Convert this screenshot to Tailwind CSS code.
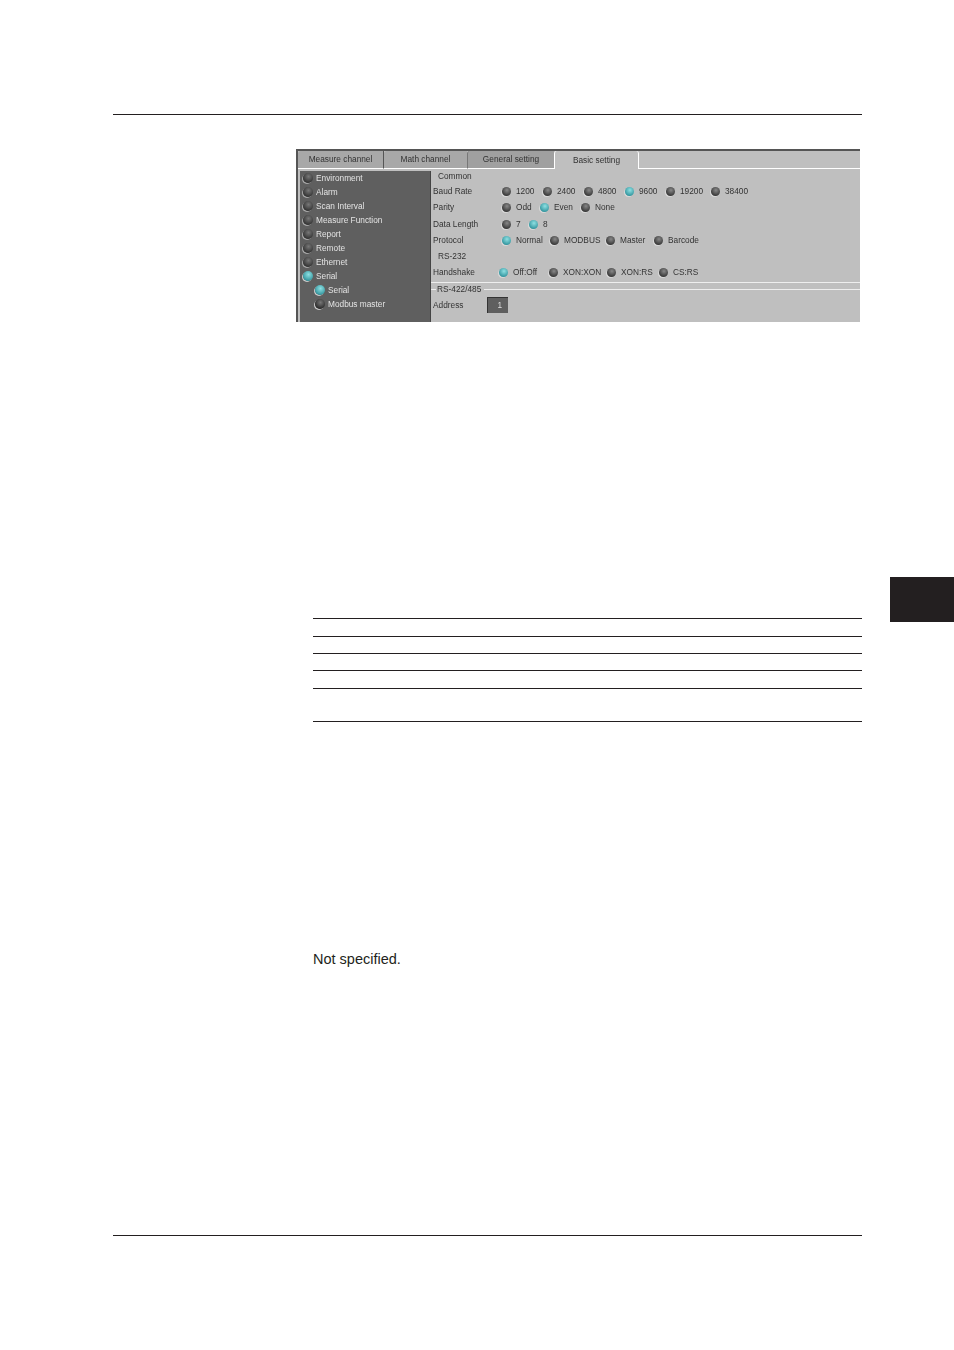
<!DOCTYPE html>
<html lang="en">
<head>
    <meta charset="UTF-8">
    <title>Serial settings</title>
    <script src="https://cdn.jsdelivr.net/npm/@tailwindcss/browser@4"></script>
</head>
<body class="bg-white">
<div class="relative w-[954px] h-[1350px] overflow-hidden bg-white font-['Liberation_Sans',sans-serif] text-black">

    <!-- chapter tab on the page edge -->
    <div class="absolute left-[890px] top-[577px] w-[64px] h-[45px] bg-[#231f20]"></div>

    <div class="pt-[114px] pl-[113px] w-[862px]">
        <div class="border-t border-[#231f20]"></div>
    </div>

    <!-- settings window -->
    <div class="ml-[296px] mt-[34px] w-[564px] h-[173px] bg-[#bfbfbf] border-t-2 border-l-2 border-[#555] overflow-hidden text-[8.3px] leading-none">
        <div class="blur-[0.3px]">
        <!-- tabs -->
        <div class="flex h-[18px] text-[#333]">
            <div class="w-[86px] h-[18px] flex items-center justify-center bg-[#a8a8a8] border-b border-white border-r border-r-[#555] rounded-tl-[3px]">Measure channel</div>
            <div class="w-[83px] h-[18px] flex items-center justify-center bg-[#a8a8a8] border-b border-white rounded-tl-[3px]">Math channel</div>
            <div class="w-[87px] h-[18px] flex items-center justify-center bg-[#a0a0a0] border-b border-white border-l border-l-[#777] rounded-tl-[3px]">General setting</div>
            <div class="w-[85px] h-[18px] flex items-center justify-center bg-[#bfbfbf] border-l border-r border-white rounded-t-[3px]">Basic setting</div>
            <div class="flex-1 h-[18px] border-b border-white"></div>
        </div>

        <div class="flex h-[153px]">
            <!-- tree -->
            <div class="ml-[2px] mt-[2px] w-[131px] h-[151px] bg-[#5f5f5f] text-[#e4e4e4] border-r border-[#444]">
                <div class="flex items-center h-[14px] pl-[3px] gap-[3px]"><span class="w-[10px] h-[10px] rounded-full shadow-[-1px_1px_0_#aaa] bg-[radial-gradient(circle_at_55%_35%,#777,#2c2c2c_80%)]"></span>Environment</div>
                <div class="flex items-center h-[14px] pl-[3px] gap-[3px]"><span class="w-[10px] h-[10px] rounded-full shadow-[-1px_1px_0_#aaa] bg-[radial-gradient(circle_at_55%_35%,#777,#2c2c2c_80%)]"></span>Alarm</div>
                <div class="flex items-center h-[14px] pl-[3px] gap-[3px]"><span class="w-[10px] h-[10px] rounded-full shadow-[-1px_1px_0_#aaa] bg-[radial-gradient(circle_at_55%_35%,#777,#2c2c2c_80%)]"></span>Scan Interval</div>
                <div class="flex items-center h-[14px] pl-[3px] gap-[3px]"><span class="w-[10px] h-[10px] rounded-full shadow-[-1px_1px_0_#aaa] bg-[radial-gradient(circle_at_55%_35%,#777,#2c2c2c_80%)]"></span>Measure Function</div>
                <div class="flex items-center h-[14px] pl-[3px] gap-[3px]"><span class="w-[10px] h-[10px] rounded-full shadow-[-1px_1px_0_#aaa] bg-[radial-gradient(circle_at_55%_35%,#777,#2c2c2c_80%)]"></span>Report</div>
                <div class="flex items-center h-[14px] pl-[3px] gap-[3px]"><span class="w-[10px] h-[10px] rounded-full shadow-[-1px_1px_0_#aaa] bg-[radial-gradient(circle_at_55%_35%,#777,#2c2c2c_80%)]"></span>Remote</div>
                <div class="flex items-center h-[14px] pl-[3px] gap-[3px]"><span class="w-[10px] h-[10px] rounded-full shadow-[-1px_1px_0_#aaa] bg-[radial-gradient(circle_at_55%_35%,#777,#2c2c2c_80%)]"></span>Ethernet</div>
                <div class="flex items-center h-[14px] pl-[3px] gap-[3px]"><span class="w-[10px] h-[10px] rounded-full shadow-[-1px_1px_0_#ccc] bg-[radial-gradient(circle_at_55%_35%,#8fe0e2,#2b8f98_80%)]"></span>Serial</div>
                <div class="flex items-center h-[14px] pl-[15px] gap-[3px]"><span class="w-[10px] h-[10px] rounded-full shadow-[-1px_1px_0_#ccc] bg-[radial-gradient(circle_at_55%_35%,#8fe0e2,#2b8f98_80%)]"></span>Serial</div>
                <div class="flex items-center h-[14px] pl-[15px] gap-[3px]"><span class="w-[10px] h-[10px] rounded-full shadow-[-1px_1px_0_#ccc] bg-[radial-gradient(circle_at_55%_35%,#777,#222_80%)]"></span>Modbus master</div>
            </div>

            <!-- settings -->
            <div class="flex-1 pl-[2px] text-[#333]">
                <div class="h-[14px] pl-[5px] flex items-center">Common</div>

                <div class="flex items-center h-[16px]">
                    <span class="w-[69px]">Baud Rate</span>
                    <div class="w-[41px] flex items-center gap-[5px]"><span class="w-[9px] h-[9px] rounded-full shadow-[-1px_1px_0_#d8d8d8] bg-[radial-gradient(circle_at_55%_35%,#888,#2f2f2f_80%)]"></span>1200</div>
                    <div class="w-[41px] flex items-center gap-[5px]"><span class="w-[9px] h-[9px] rounded-full shadow-[-1px_1px_0_#d8d8d8] bg-[radial-gradient(circle_at_55%_35%,#888,#2f2f2f_80%)]"></span>2400</div>
                    <div class="w-[41px] flex items-center gap-[5px]"><span class="w-[9px] h-[9px] rounded-full shadow-[-1px_1px_0_#d8d8d8] bg-[radial-gradient(circle_at_55%_35%,#888,#2f2f2f_80%)]"></span>4800</div>
                    <div class="w-[41px] flex items-center gap-[5px]"><span class="w-[9px] h-[9px] rounded-full shadow-[-1px_1px_0_#d8d8d8] bg-[radial-gradient(circle_at_55%_35%,#8fe0e2,#2a8f99_80%)]"></span>9600</div>
                    <div class="w-[45px] flex items-center gap-[5px]"><span class="w-[9px] h-[9px] rounded-full shadow-[-1px_1px_0_#d8d8d8] bg-[radial-gradient(circle_at_55%_35%,#888,#2f2f2f_80%)]"></span>19200</div>
                    <div class="w-[45px] flex items-center gap-[5px]"><span class="w-[9px] h-[9px] rounded-full shadow-[-1px_1px_0_#d8d8d8] bg-[radial-gradient(circle_at_55%_35%,#888,#2f2f2f_80%)]"></span>38400</div>
                </div>
                <div class="flex items-center h-[17px]">
                    <span class="w-[69px]">Parity</span>
                    <div class="w-[38px] flex items-center gap-[5px]"><span class="w-[9px] h-[9px] rounded-full shadow-[-1px_1px_0_#d8d8d8] bg-[radial-gradient(circle_at_55%_35%,#888,#2f2f2f_80%)]"></span>Odd</div>
                    <div class="w-[41px] flex items-center gap-[5px]"><span class="w-[9px] h-[9px] rounded-full shadow-[-1px_1px_0_#d8d8d8] bg-[radial-gradient(circle_at_55%_35%,#8fe0e2,#2a8f99_80%)]"></span>Even</div>
                    <div class="w-[41px] flex items-center gap-[5px]"><span class="w-[9px] h-[9px] rounded-full shadow-[-1px_1px_0_#d8d8d8] bg-[radial-gradient(circle_at_55%_35%,#888,#2f2f2f_80%)]"></span>None</div>
                </div>
                <div class="flex items-center h-[16px]">
                    <span class="w-[69px]">Data Length</span>
                    <div class="w-[27px] flex items-center gap-[5px]"><span class="w-[9px] h-[9px] rounded-full shadow-[-1px_1px_0_#d8d8d8] bg-[radial-gradient(circle_at_55%_35%,#888,#2f2f2f_80%)]"></span>7</div>
                    <div class="w-[27px] flex items-center gap-[5px]"><span class="w-[9px] h-[9px] rounded-full shadow-[-1px_1px_0_#d8d8d8] bg-[radial-gradient(circle_at_55%_35%,#8fe0e2,#2a8f99_80%)]"></span>8</div>
                </div>
                <div class="flex items-center h-[16px]">
                    <span class="w-[69px]">Protocol</span>
                    <div class="w-[48px] flex items-center gap-[5px]"><span class="w-[9px] h-[9px] rounded-full shadow-[-1px_1px_0_#d8d8d8] bg-[radial-gradient(circle_at_55%_35%,#8fe0e2,#2a8f99_80%)]"></span>Normal</div>
                    <div class="w-[56px] flex items-center gap-[5px]"><span class="w-[9px] h-[9px] rounded-full shadow-[-1px_1px_0_#d8d8d8] bg-[radial-gradient(circle_at_55%_35%,#888,#2f2f2f_80%)]"></span>MODBUS</div>
                    <div class="w-[48px] flex items-center gap-[5px]"><span class="w-[9px] h-[9px] rounded-full shadow-[-1px_1px_0_#d8d8d8] bg-[radial-gradient(circle_at_55%_35%,#888,#2f2f2f_80%)]"></span>Master</div>
                    <div class="w-[48px] flex items-center gap-[5px]"><span class="w-[9px] h-[9px] rounded-full shadow-[-1px_1px_0_#d8d8d8] bg-[radial-gradient(circle_at_55%_35%,#888,#2f2f2f_80%)]"></span>Barcode</div>
                </div>
                <div class="h-[17px] pl-[5px] flex items-center">RS-232</div>
                <div class="flex items-center h-[15px]">
                    <span class="w-[66px]">Handshake</span>
                    <div class="w-[50px] flex items-center gap-[5px]"><span class="w-[9px] h-[9px] rounded-full shadow-[-1px_1px_0_#d8d8d8] bg-[radial-gradient(circle_at_55%_35%,#8fe0e2,#2a8f99_80%)]"></span>Off:Off</div>
                    <div class="w-[58px] flex items-center gap-[5px]"><span class="w-[9px] h-[9px] rounded-full shadow-[-1px_1px_0_#d8d8d8] bg-[radial-gradient(circle_at_55%_35%,#888,#2f2f2f_80%)]"></span>XON:XON</div>
                    <div class="w-[52px] flex items-center gap-[5px]"><span class="w-[9px] h-[9px] rounded-full shadow-[-1px_1px_0_#d8d8d8] bg-[radial-gradient(circle_at_55%_35%,#888,#2f2f2f_80%)]"></span>XON:RS</div>
                    <div class="w-[52px] flex items-center gap-[5px]"><span class="w-[9px] h-[9px] rounded-full shadow-[-1px_1px_0_#d8d8d8] bg-[radial-gradient(circle_at_55%_35%,#888,#2f2f2f_80%)]"></span>CS:RS</div>
                </div>
                <div class="mt-[2px] -ml-[2px] h-[6px] border-t border-[#eee]"></div>
                <div class="-mt-[3px] flex items-center h-[9px] -ml-[2px]">
                    <span class="w-[5px] border-t border-[#eee]"></span>
                    <span class="px-[1px]">RS-422/485</span>
                    <span class="ml-[2px] flex-1 border-t border-[#eee]"></span>
                </div>
                <div class="flex items-center mt-[3px] h-[16px]">
                    <span class="w-[54px]">Address</span>
                    <div class="w-[21px] h-[16px] bg-[#5f5f5f] border-t border-l border-[#333] text-[#ddd] flex items-center justify-end pr-[6px]">1</div>
                </div>
            </div>
        </div>
        </div>
    </div>

    <!-- table rules, the cells are empty -->
    <div class="ml-[313px] mt-[296px] w-[549px] border-b border-[#231f20]">
        <div class="h-[18px] border-t border-[#231f20]"></div>
        <div class="h-[17px] border-t border-[#231f20]"></div>
        <div class="h-[17px] border-t border-[#231f20]"></div>
        <div class="h-[18px] border-t border-[#231f20]"></div>
        <div class="h-[33px] border-t border-[#231f20]"></div>
    </div>

    <p class="ml-[313px] mt-[228px] text-[14.5px] leading-[18px] text-[#231f20]">Not specified.</p>

    <div class="ml-[113px] mt-[267px] w-[749px] border-t border-[#231f20]"></div>
</div>
</body>
</html>
